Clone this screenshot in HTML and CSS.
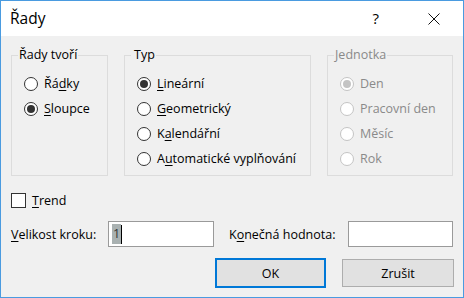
FILE: index.html
```html
<!DOCTYPE html>
<html lang="cs">
<head>
<meta charset="utf-8">
<title>Řady</title>
<link rel="stylesheet" href="styles.css">
</head>
<body>
<div class="window">
  <div class="titlebar">
    <span class="title">Řady</span>
    <span class="help">?</span>
    <svg class="close" width="12" height="12" viewBox="0 0 12 12"><path d="M0.5 0.5 L11.5 11.5 M11.5 0.5 L0.5 11.5" stroke="#111" stroke-width="1" fill="none"/></svg>
  </div>
  <div class="content">
    <div class="groups">
      <fieldset class="group g1">
        <legend>Řady tvoří</legend>
        <div class="opts">
          <div class="opt"><span class="radio"></span><span>Řá<u>d</u>ky</span></div>
          <div class="opt"><span class="radio checked"></span><span><u>S</u>loupce</span></div>
        </div>
      </fieldset>
      <fieldset class="group g2">
        <legend>Typ</legend>
        <div class="opts">
          <div class="opt"><span class="radio checked"></span><span><u>L</u>ineární</span></div>
          <div class="opt"><span class="radio"></span><span><u>G</u>eometrický</span></div>
          <div class="opt"><span class="radio"></span><span>K<u>a</u>lendářní</span></div>
          <div class="opt"><span class="radio"></span><span>A<u>u</u>tomatické vyplňování</span></div>
        </div>
      </fieldset>
      <fieldset class="group g3 disabled">
        <legend>Jednotka</legend>
        <div class="opts">
          <div class="opt"><span class="radio checked"></span><span>Den</span></div>
          <div class="opt"><span class="radio"></span><span>Pracovní den</span></div>
          <div class="opt"><span class="radio"></span><span>Měsíc</span></div>
          <div class="opt"><span class="radio"></span><span>Rok</span></div>
        </div>
      </fieldset>
    </div>
    <div class="trend-row">
      <span class="checkbox"></span><span><u>T</u>rend</span>
    </div>
    <div class="fields-row">
      <span class="flabel l1"><u>V</u>elikost kroku:</span>
      <div class="input i1"><span class="sel">1</span><span class="caret"></span></div>
      <span class="flabel l2">K<u>o</u>nečná hodnota:</span>
      <div class="input i2"></div>
    </div>
    <div class="buttons">
      <div class="btn ok">OK</div>
      <div class="btn cancel">Zrušit</div>
    </div>
  </div>
</div>
</body>
</html>
```
FILE: styles.css
```css
html, body {
  margin: 0;
  padding: 0;
  background: #f0f0f0;
}
.window {
  box-sizing: border-box;
  width: 464px;
  height: 298px;
  border: 1px solid #4a9be0;
  background: #f0f0f0;
  font-family: "Open Sans", "Noto Sans", sans-serif;
  font-size: 12.5px;
  color: #000;
}
.titlebar {
  height: 35px;
  background: #fff;
  display: flex;
  align-items: center;
}
.title {
  margin-left: 9px;
  font-size: 15.5px;
  flex: 1;
  padding-bottom: 1px;
}
.help {
  font-size: 15px;
  margin-right: 49px;
  padding-bottom: 1px;
}
.close {
  margin-right: 23px;
  margin-top: 1px;
}
.content {
  padding: 11px 10px 0 10px;
}
.groups {
  display: flex;
  gap: 16px;
  align-items: stretch;
}
.group {
  margin: 0;
  padding: 0 6px 4px 6px;
  border: 1px solid #dcdcdc;
  min-width: 0;
  box-sizing: border-box;
}
.g1 { width: 97px; }
.g2 { width: 187px; }
.g2 legend { padding: 0 1px 0 3px; }
.g3 { width: 126px; }
legend {
  padding: 0 1px;
  line-height: 16px;
}
.opts {
  padding: 8px 0 0 6px;
}
.opt {
  height: 25px;
  display: flex;
  align-items: center;
  gap: 6px;
  white-space: nowrap;
}
.radio {
  box-sizing: border-box;
  width: 14px;
  height: 14px;
  border: 1px solid #333;
  border-radius: 50%;
  background: #fff;
  display: flex;
  align-items: center;
  justify-content: center;
  flex: none;
}
.radio.checked::after {
  content: "";
  width: 8px;
  height: 8px;
  border-radius: 50%;
  background: #333;
}
.disabled { color: #8a8a8a; }
.disabled .radio { border-color: #c4c4c4; }
.disabled .radio.checked::after { background: #c4c4c4; }
u { text-underline-offset: 2px; text-decoration-thickness: 1px; }
.trend-row {
  margin-top: 15px;
  height: 19px;
  display: flex;
  align-items: center;
  gap: 6px;
}
.checkbox {
  box-sizing: border-box;
  width: 15px;
  height: 15px;
  border: 1px solid #333;
  background: #fff;
  flex: none;
}
.fields-row {
  margin-top: 11px;
  display: flex;
  align-items: center;
  height: 26px;
}
.flabel { white-space: nowrap; }
.l1 { width: 97px; }
.l2 { width: 119px; margin-left: 15px; }
.input {
  box-sizing: border-box;
  height: 26px;
  border: 1px solid #9a9a9a;
  background: #fff;
  display: flex;
  align-items: center;
  padding-left: 3px;
}
.i1 { width: 106px; }
.i2 { width: 105px; }
.sel {
  background: #a9b1b1;
  color: #333;
  line-height: 20px;
  padding: 0 1px;
}
.caret {
  width: 1px;
  height: 19px;
  background: #000;
}
.buttons {
  margin-top: 11px;
  display: flex;
  justify-content: flex-end;
  align-items: center;
  gap: 16px;
  height: 30px;
}
.btn {
  box-sizing: border-box;
  background: #e1e1e1;
  display: flex;
  align-items: center;
  justify-content: center;
}
.ok {
  width: 111px;
  height: 30px;
  border: 2px solid #0078d7;
}
.cancel {
  width: 112px;
  height: 28px;
  border: 1px solid #adadad;
  margin-right: -1px;
}
```
